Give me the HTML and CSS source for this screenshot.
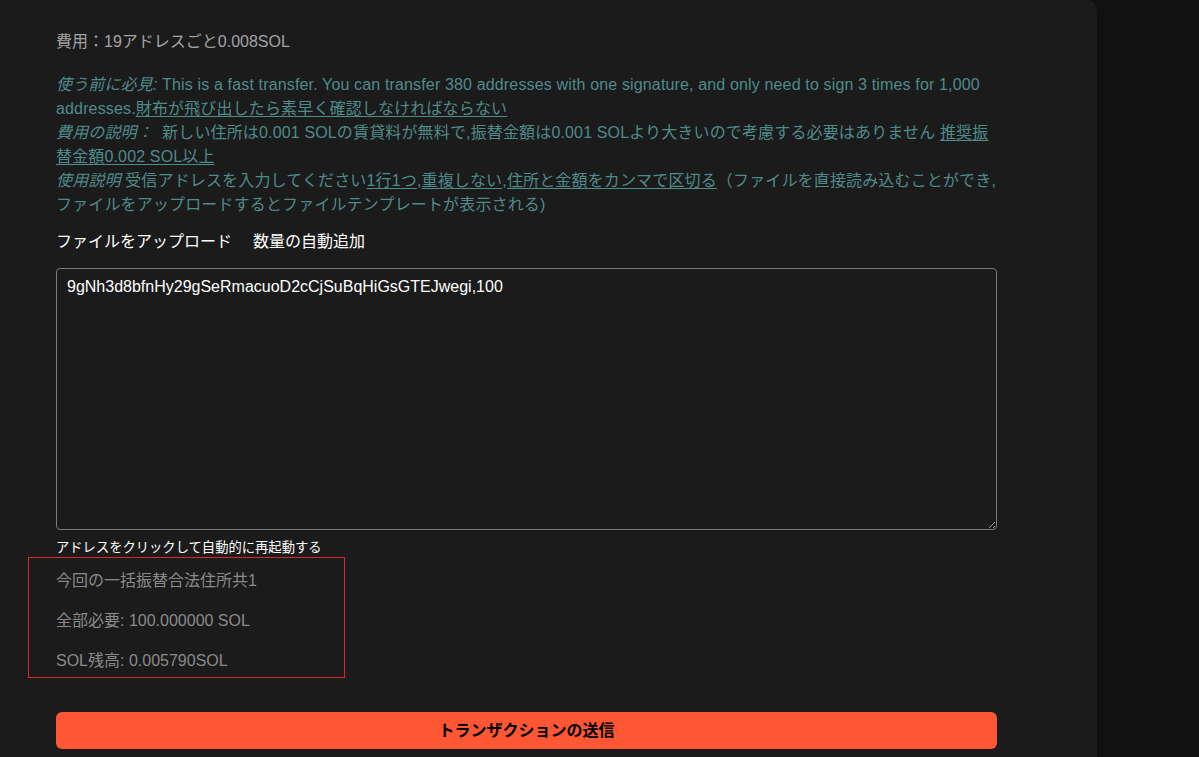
FILE: index.html
```html
<!DOCTYPE html>
<html>
<head>
  <meta charset="utf-8">
  <title>一括送金</title>
  <link rel="stylesheet" href="styles.css">
</head>
<body>
  <div class="panel">
    <p class="fee">費用：19アドレスごと0.008SOL</p>

    <!-- notes -->
    <div class="notes">
      <div><i>使う前に必見:</i> This is a fast transfer. You can transfer 380 addresses with one signature, and only need to sign 3 times for 1,000 addresses.<u>財布が飛び出したら素早く確認しなければならない</u></div>
      <div><i>費用の説明：</i>&nbsp; 新しい住所は0.001 SOLの賃貸料が無料で,振替金額は0.001 SOLより大きいので考慮する必要はありません <u>推奨振替金額0.002 SOL以上</u></div>
      <div><i>使用説明</i> 受信アドレスを入力してください<u>1行1つ</u>,<u>重複しない</u>,<u>住所と金額をカンマで区切る</u>（ファイルを直接読み込むことができ, ファイルをアップロードするとファイルテンプレートが表示される)</div>
    </div>

    <div class="tools">
      <span>ファイルをアップロード</span>
      <span>数量の自動追加</span>
    </div>

    <textarea class="addr-input">9gNh3d8bfnHy29gSeRmacuoD2cCjSuBqHiGsGTEJwegi,100</textarea>
    <div class="hint">アドレスをクリックして自動的に再起動する</div>

    <div class="summary">
      <p>今回の一括振替合法住所共1</p>
      <p>全部必要: 100.000000 SOL</p>
      <p>SOL残高: 0.005790SOL</p>
    </div>

    <button class="send-btn">トランザクションの送信</button>
  </div>
</body>
</html>
```

FILE: styles.css
```css
body {
  margin: 0;
  background: #111111;
  font-family: 'Liberation Sans', Arial, 'Noto Sans CJK JP', sans-serif;
  font-size: 16px;
  line-height: 24px;
  color: #a0a0a0;
}

.panel {
  width: 1097px;
  height: 757px;
  box-sizing: border-box;
  background: #1b1b1b;
  border-top-right-radius: 10px;
  padding: 30px 100px 0 56px;
}

p {
  margin: 0;
}

.fee {
  color: #a3a3a3;
}

.notes {
  margin-top: 19px;
  color: #4e8b8b;
  letter-spacing: 0.15px;
}

.notes u {
  text-underline-offset: 2px;
}

.tools {
  margin-top: 13px;
  color: #ffffff;
  display: flex;
  gap: 21px;
}

.addr-input {
  display: block;
  margin-top: 14px;
  width: 100%;
  height: 262px;
  box-sizing: border-box;
  background: #1b1b1b;
  border: 1px solid #7a7a7a;
  border-radius: 4px;
  color: #ffffff;
  font-family: 'Liberation Sans', Arial, sans-serif;
  font-size: 16px;
  line-height: 20px;
  padding: 8px 10px;
  resize: vertical;
  outline: none;
}

.hint {
  margin-top: 9px;
  font-size: 13.3px;
  line-height: 18px;
  color: #ffffff;
}

.summary {
  margin-left: -28px;
  width: 317px;
  box-sizing: border-box;
  border: 1px solid #d9262b;
  padding: 11px 0 4px 27px;
  color: #8a8a8a;
}

.summary p + p {
  margin-top: 16px;
}

.send-btn {
  display: block;
  margin-top: 34px;
  width: 100%;
  height: 37px;
  padding: 0 0 3px;
  background: #ff5733;
  border: none;
  border-radius: 6px;
  color: #000000;
  font-family: 'Liberation Sans', 'Noto Sans CJK JP', sans-serif;
  font-size: 16px;
  font-weight: bold;
  cursor: pointer;
}
```
